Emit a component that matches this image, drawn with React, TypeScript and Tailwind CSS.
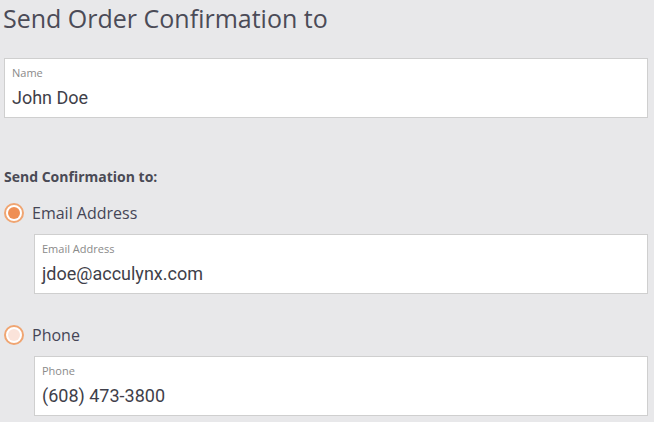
import { useState } from "react";

type FieldProps = {
  label: string;
  value: string;
  className?: string;
};

function Field({ label, value, className = "" }: FieldProps) {
  return (
    <div className={`h-[60px] border border-[#cfcfcf] bg-white px-[7px] ${className}`}>
      <div className="pt-[6px] font-['Open_Sans',sans-serif] text-[11px] leading-[16px] text-[#8a8a8a]">{label}</div>
      <div className="mt-[5px] font-['Roboto',sans-serif] text-[18px] leading-[24px] text-[#3f3f4a]">{value}</div>
    </div>
  );
}

function Radio({ checked, label, onClick }: { checked: boolean; label: string; onClick: () => void }) {
  return (
    <button type="button" onClick={onClick} className="flex items-center gap-[8px] pl-[4px]">
      <span className="flex h-[20px] w-[20px] items-center justify-center rounded-full border-2 border-[#f0a572] bg-white">
        <span className={`h-[12px] w-[12px] rounded-full ${checked ? "bg-[#ef8f54]" : "bg-[#fbe3da]"}`} />
      </span>
      <span className="font-['Open_Sans',sans-serif] text-[16px] leading-[22px] text-[#454556]">{label}</span>
    </button>
  );
}

export default function App() {
  const [method, setMethod] = useState("email");

  return (
    <div className="h-[422px] w-[654px] overflow-hidden bg-[#e8e8ea] pr-[6px]">
      <h1 className="pl-[3px] pt-[1px] font-['Open_Sans',sans-serif] text-[25px] leading-[34px] text-[#4b4b57]">
        Send Order Confirmation to
      </h1>

      <Field label="Name" value="John Doe" className="ml-[4px] mt-[23px]" />

      <div className="mt-[49px] pl-[4px] font-['Open_Sans',sans-serif] text-[14px] font-bold leading-[20px] text-[#4a4a55]">
        Send Confirmation to:
      </div>

      <div className="mt-[15px]">
        <Radio checked={method === "email"} label="Email Address" onClick={() => setMethod("email")} />
      </div>
      <Field label="Email Address" value="jdoe@acculynx.com" className="ml-[34px] mt-[10px]" />

      <div className="mt-[30px]">
        <Radio checked={method === "phone"} label="Phone" onClick={() => setMethod("phone")} />
      </div>
      <Field label="Phone" value="(608) 473-3800" className="ml-[34px] mt-[10px]" />
    </div>
  );
}
